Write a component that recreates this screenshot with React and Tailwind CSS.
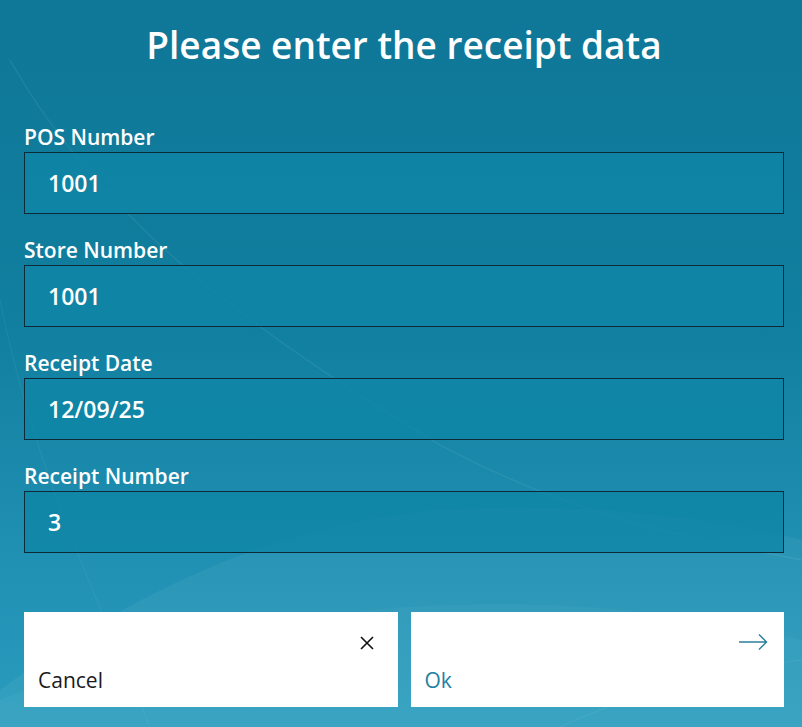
import React from 'react';

const fields = [
  { label: 'POS Number', value: '1001' },
  { label: 'Store Number', value: '1001' },
  { label: 'Receipt Date', value: '12/09/25' },
  { label: 'Receipt Number', value: '3' },
];

const Waves = () => (
  <svg className="absolute inset-0 w-full h-full pointer-events-none" viewBox="0 0 802 727" preserveAspectRatio="none">
    {/* soft light band lower half */}
    <path d="M0 690 C 120 600, 260 530, 420 512 C 560 500, 700 515, 802 540 L 802 727 L 0 727 Z" fill="#ffffff" fillOpacity="0.05" />
    <path d="M0 727 L0 700 C 150 640, 300 610, 450 605 C 600 600, 720 620, 802 640 L 802 727 Z" fill="#ffffff" fillOpacity="0.03" />
    {/* thin crossing line */}
    <path d="M10 60 C 100 220, 250 330, 440 445 C 580 520, 700 540, 802 560" fill="none" stroke="#ffffff" strokeOpacity="0.08" strokeWidth="1.2" />
    <path d="M0 300 C 30 450, 80 560, 150 727" fill="none" stroke="#ffffff" strokeOpacity="0.06" strokeWidth="1" />
    <path d="M560 727 C 640 690, 720 670, 802 660" fill="none" stroke="#ffffff" strokeOpacity="0.07" strokeWidth="1" />
  </svg>
);

export default function App() {
  return (
    <div
      className="relative w-[802px] h-[727px] overflow-hidden bg-[linear-gradient(180deg,#0f7798_0%,#117f9f_45%,#1f8fb2_75%,#2a9cbe_100%)] text-white"
      style={{ fontFamily: '"Open Sans", "Noto Sans", sans-serif' }}
    >
      <Waves />
      <div className="relative flex flex-col pl-6 pr-[18px] pt-[21px]">
        <h1 className="text-center text-[37px] leading-[48px] font-semibold">Please enter the receipt data</h1>

        <div className="mt-[54px] flex flex-col gap-[22px]">
          {fields.map((f) => (
            <div key={f.label} className="flex flex-col">
              <label className="text-[21px] leading-[29px] font-semibold">{f.label}</label>
              <div className="h-[62px] border border-[#0d2a38] bg-[#0f86a6]/80 flex items-center pl-[23px] text-[23px] font-semibold">
                {f.value}
              </div>
            </div>
          ))}
        </div>

        <div className="mt-[59px] grid grid-cols-2 gap-[13px]">
          <button className="h-[95px] bg-white flex flex-col justify-between text-left">
            <div className="flex justify-end pt-[24px] pr-[24px]">
              <svg width="14" height="14" viewBox="0 0 14 14">
                <path d="M1 1 L13 13 M13 1 L1 13" stroke="#111" strokeWidth="1.6" fill="none" />
              </svg>
            </div>
            <span className="pl-[14px] pb-[13px] text-[21px] leading-[28px] text-[#1a1a1a]">Cancel</span>
          </button>
          <button className="h-[95px] bg-white flex flex-col justify-between text-left">
            <div className="flex justify-end pt-[21px] pr-[16px]">
              <svg width="30" height="18" viewBox="0 0 30 18">
                <path d="M1 9 L28.5 9 M21 1.5 L28.5 9 L21 16.5" stroke="#2d7f9c" strokeWidth="1.5" fill="none" />
              </svg>
            </div>
            <span className="pl-[14px] pb-[13px] text-[21px] leading-[28px] text-[#1d80a2]">Ok</span>
          </button>
        </div>
      </div>
    </div>
  );
}
